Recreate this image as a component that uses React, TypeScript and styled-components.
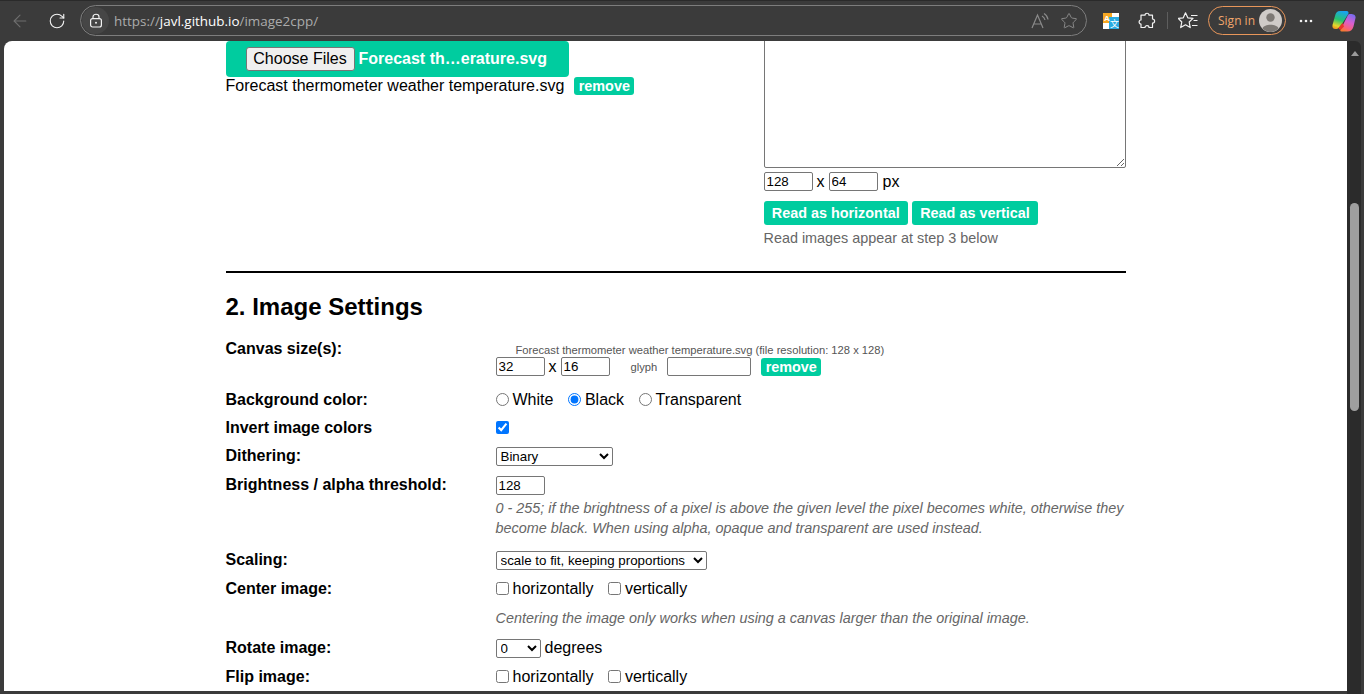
import React from 'react'
import styled, { createGlobalStyle } from 'styled-components'
import { ArrowLeft, RotateCw, Star } from 'lucide-react'

const GREEN = '#00cc9f'

const GlobalStyle = createGlobalStyle`
  html, body {
    margin: 0;
    height: 100%;
    overflow: hidden;
    background: #3b3b3b;
  }
  #root { height: 100%; }
`

const Window = styled.div`
  height: 694px;
  display: flex;
  flex-direction: column;
  background: #3b3b3b;
  font-family: "Liberation Sans", Arial, sans-serif;
  font-size: 16px;
  color: #000;
`

const Toolbar = styled.div`
  height: 41px;
  flex-shrink: 0;
  box-sizing: border-box;
  border-top: 1px solid #2a2a2a;
  display: flex;
  align-items: center;
  padding-bottom: 1px;
`

const NavButton = styled.div<{ $width: number }>`
  width: ${p => p.$width}px;
  display: flex;
  justify-content: center;
  align-items: center;
  flex-shrink: 0;
`

const AddressBar = styled.div`
  width: 1007px;
  height: 31px;
  margin-left: 6px;
  box-sizing: border-box;
  border: 1px solid #7d7d7d;
  border-radius: 16px;
  display: flex;
  align-items: center;
  flex-shrink: 0;
`

const LockBubble = styled.div`
  width: 27px;
  height: 27px;
  margin-left: 1px;
  border-radius: 50%;
  background: #464646;
  display: flex;
  align-items: center;
  justify-content: center;
`

const Url = styled.div`
  margin-left: 5px;
  flex: 1;
  font-family: "Open Sans", "Noto Sans", sans-serif;
  font-size: 13.45px;
  color: #ababab;
  white-space: nowrap;
`

const UrlHost = styled.span`
  color: #fff;
`

const AddressIcons = styled.div`
  display: flex;
  align-items: center;
  gap: 10px;
  margin-right: 8px;
`

const ToolSeparator = styled.div`
  width: 1px;
  height: 17px;
  background: #5e5e5e;
  flex-shrink: 0;
`

const SignIn = styled.div`
  width: 78px;
  height: 29px;
  box-sizing: border-box;
  border: 1px solid #e8965a;
  border-radius: 15px;
  display: flex;
  align-items: center;
  justify-content: space-between;
  padding: 0 3px 0 9px;
  color: #f0a56c;
  font-family: "Open Sans", "Noto Sans", sans-serif;
  font-size: 12px;
  flex-shrink: 0;
`

const Main = styled.div`
  flex: 1;
  min-height: 0;
  display: flex;
  padding-left: 4px;
  padding-bottom: 3px;
`

const Viewport = styled.div`
  flex: 1;
  min-width: 0;
  background: #fff;
  border-radius: 8px 0 0 0;
  overflow: hidden;
`

const Scrollbar = styled.div`
  width: 14px;
  margin-right: 3px;
  margin-bottom: -3px;
  background: #2b2b2b;
  border-radius: 0 6px 0 0;
  display: flex;
  flex-direction: column;
  align-items: center;
  flex-shrink: 0;
`

const ScrollArrow = styled.div`
  width: 0;
  height: 0;
  margin-top: 10px;
  margin-left: 1px;
  border-left: 4.5px solid transparent;
  border-right: 4.5px solid transparent;
  border-bottom: 5px solid #9b9b9b;
`

const ScrollThumb = styled.div`
  width: 9px;
  height: 208px;
  margin-top: 147px;
  margin-left: 1px;
  border-radius: 5px;
  background: #9f9f9f;
`

const Column = styled.div`
  width: 900px;
  margin: 0 auto;
`

const UploadGrid = styled.div`
  display: flex;
  justify-content: space-between;
  height: 230px;
`

const UploadLeft = styled.div`
  width: 343px;
`

const UploadBox = styled.div`
  height: 36px;
  box-sizing: border-box;
  padding-left: 20px;
  display: flex;
  align-items: center;
  background: ${GREEN};
  border-radius: 4px;
  color: #fff;
  font-weight: bold;
  white-space: nowrap;
`

const ChooseButton = styled.button`
  height: 24px;
  width: 109px;
  margin-right: 4px;
  padding: 0;
  box-sizing: border-box;
  border: 1px solid #767676;
  border-radius: 3px;
  background: #efefef;
  color: #000;
  font-family: "Liberation Sans", Arial, sans-serif;
  font-size: 16px;
`

const FileLine = styled.div`
  display: flex;
  align-items: center;
  height: 18px;
  white-space: nowrap;
`

const Pill = styled.span<{ $left: number }>`
  display: inline-flex;
  align-items: center;
  justify-content: center;
  flex-shrink: 0;
  height: 18px;
  width: 60px;
  margin-left: ${p => p.$left}px;
  background: ${GREEN};
  border-radius: 3px;
  color: #fff;
  font-size: 14.4px;
  font-weight: bold;
`

const UploadRight = styled.div`
  width: 362px;
`

const PasteArea = styled.textarea`
  display: block;
  width: 362px;
  height: 138px;
  margin: -11px 0 0;
  box-sizing: border-box;
  border: 1px solid #767676;
  border-radius: 2px;
  background: #fff;
`

const DimRow = styled.div`
  display: flex;
  align-items: center;
  height: 19px;
  margin-top: 4px;
`

const SmallInput = styled.input<{ $width?: number }>`
  width: ${p => p.$width ?? 49}px;
  height: 19px;
  box-sizing: border-box;
  padding: 1px 2px;
  border: 1px solid #767676;
  border-radius: 2px;
  font-family: "Liberation Sans", Arial, sans-serif;
  font-size: 13.333px;
  color: #000;
  background: #fff;
`

const Cross = styled.span`
  margin: 0 4px;
`

const Unit = styled.span`
  margin-left: 5px;
`

const ReadButtons = styled.div`
  display: flex;
  gap: 4px;
  margin-top: 10px;
`

const ReadButton = styled.span`
  height: 24px;
  padding: 0 8.25px;
  display: flex;
  align-items: center;
  background: ${GREEN};
  border-radius: 3px;
  color: #fff;
  font-size: 14.4px;
  font-weight: bold;
  white-space: nowrap;
`

const ReadHint = styled.div`
  margin-top: 5px;
  font-size: 14.4px;
  line-height: 16px;
  color: #666;
`

const Rule = styled.hr`
  height: 2px;
  margin: 0;
  border: 0;
  background: #000;
`

const SectionTitle = styled.h2`
  margin: 20px 0 14px;
  font-size: 24px;
  line-height: 28px;
  font-weight: bold;
`

const Row = styled.div<{ $height: number }>`
  display: grid;
  grid-template-columns: 270px 630px;
  height: ${p => p.$height}px;
  align-items: start;
`

const Label = styled.div`
  font-weight: bold;
  line-height: 28px;
`

const Value = styled.div`
  min-height: 28px;
  display: flex;
  align-items: center;
  flex-wrap: wrap;
  white-space: nowrap;
`

const CanvasValue = styled.div`
  display: flex;
  flex-direction: column;
`

const CanvasCaption = styled.div`
  height: 14px;
  padding-left: 20px;
  margin-top: 8px;
  font-size: 11.2px;
  line-height: 14px;
  color: #555;
  white-space: nowrap;
`

const CanvasControls = styled.div`
  display: flex;
  align-items: center;
  height: 19px;
`

const Glyph = styled.span`
  margin: 0 10px 0 21px;
  font-size: 11.2px;
  color: #555;
`

const OptionLabel = styled.label`
  display: inline-flex;
  align-items: center;
  margin-right: 14.5px;
`

const Radio = styled.input.attrs({ type: 'radio' })`
  width: 13px;
  height: 13px;
  margin: 0 4px 2px 0;
`

const Check = styled.input.attrs({ type: 'checkbox' })`
  width: 13px;
  height: 13px;
  margin: 0 4px 2px 0;
`

const Select = styled.select<{ $width: number }>`
  width: ${p => p.$width}px;
  height: 19px;
  box-sizing: border-box;
  padding: 0;
  border: 1px solid #767676;
  border-radius: 2px;
  background: #fff;
  color: #000;
  font-family: "Liberation Sans", Arial, sans-serif;
  font-size: 13.333px;
`

const DegreesText = styled.span`
  margin-left: 4px;
`

const Note = styled.div`
  font-size: 14.4px;
  line-height: 20px;
  font-style: italic;
  color: #666;
`

const BrightnessValue = styled.div`
  display: flex;
  flex-direction: column;
  padding-top: 5px;
`

const BrightnessNote = styled(Note)`
  margin-top: 3px;
  white-space: normal;
`

const CenterNote = styled(Note)`
  padding-top: 3px;
`

const ReadAloudIcon = () => (
  <svg width="20" height="20" viewBox="0 0 20 20" fill="none" stroke="#8a8a8a" strokeWidth="1.2">
    <path d="M2 17 L7.5 4 L13 17 M4 13 H11" />
    <path d="M12 5 Q14.5 6.5 15 9 M14 2.5 Q17.5 4.5 18 8.5" />
  </svg>
)

const TranslateIcon = () => (
  <svg width="16" height="16" viewBox="0 0 16 16">
    <rect width="16" height="16" fill="#fff" />
    <rect width="9" height="10" fill="#f7a823" />
    <rect x="6" y="4" width="10" height="12" fill="#29abe2" />
    <text x="1" y="8" fontSize="8" fontWeight="bold" fill="#fff" fontFamily="Liberation Sans">A</text>
    <text x="7" y="14" fontSize="9" fill="#fff" fontFamily="Noto Sans CJK SC">文</text>
  </svg>
)

const ExtensionIcon = () => (
  <svg width="18" height="18" viewBox="0 0 18 18" fill="none" stroke="#f2f2f2" strokeWidth="1.2" strokeLinejoin="round">
    <path d="M7 3.2 C7 0.6 11 0.6 11 3.2 H14.5 V7 C17.3 7 17.3 11.2 14.5 11.2 V15.5 H11 C11 13 7 13 7 15.5 H3 V12 C0.5 12 0.5 8 3 8 V3.2 Z" />
  </svg>
)

const FavoritesIcon = () => (
  <svg width="20" height="18" viewBox="0 0 20 18" fill="none" stroke="#f2f2f2" strokeWidth="1.2" strokeLinejoin="round">
    <path d="M7.5 0.8 L9.8 5.8 L15 6.4 L11.2 10 L12.2 15.6 L7.5 12.8 L2.7 15.6 L3.8 10 L0.3 6.4 L5.3 5.8 Z" />
    <path d="M13 3.5 H19.5 M15.5 8.5 H19.5 M14 13.5 H19.5" />
  </svg>
)

const AvatarIcon = () => (
  <svg width="23" height="23" viewBox="0 0 23 23">
    <circle cx="11.5" cy="11.5" r="11.5" fill="#cfcbc8" />
    <circle cx="11.5" cy="8.5" r="4.2" fill="#7d7975" />
    <path d="M3.5 19.5 C5 14.5 18 14.5 19.5 19.5 C15 24 8 24 3.5 19.5 Z" fill="#7d7975" />
  </svg>
)

const MoreIcon = () => (
  <svg width="14" height="4" viewBox="0 0 14 4" fill="#f2f2f2">
    <circle cx="2" cy="2" r="1.3" />
    <circle cx="7" cy="2" r="1.3" />
    <circle cx="12" cy="2" r="1.3" />
  </svg>
)

const CopilotIcon = () => (
  <svg width="24" height="22" viewBox="0 0 24 22">
    <defs>
      <linearGradient id="copilotA" x1="0.6" y1="0" x2="0.3" y2="1">
        <stop offset="0" stopColor="#1aa3f0" />
        <stop offset="0.5" stopColor="#27c46e" />
        <stop offset="0.85" stopColor="#e8d52a" />
        <stop offset="1" stopColor="#f09a20" />
      </linearGradient>
      <linearGradient id="copilotB" x1="0.7" y1="0" x2="0.3" y2="1">
        <stop offset="0" stopColor="#7a6cf0" />
        <stop offset="0.45" stopColor="#d95fd0" />
        <stop offset="0.8" stopColor="#f8607a" />
        <stop offset="1" stopColor="#f57a30" />
      </linearGradient>
    </defs>
    <path d="M8 1 H14.5 C16.5 1 17 2.5 16.2 4 L10 14 L7 17.5 C6 18.6 5 19 3.5 19 C1.2 19 0 17.5 0.5 15 L3 6 C3.8 2.8 5.2 1 8 1 Z" fill="url(#copilotA)" />
    <path d="M17.5 4 C20.5 3.6 23.8 4.6 23.6 7.5 L21.5 16.5 C20.8 19.5 18.5 21.5 15.5 21.5 H9.5 C8.2 21.5 8 20.5 8.8 19.3 L15 7 C15.6 5.6 16.2 4.2 17.5 4 Z" fill="url(#copilotB)" />
    <path d="M6.5 18 L10.5 13 L12 16.5 L9 19.5 C8 20.2 7 19.2 6.5 18 Z" fill="#e8352a" />
  </svg>
)

const LockIcon = () => (
  <svg width="14" height="15" viewBox="0 0 14 15" fill="none" stroke="#f2f2f2" strokeWidth="1.2">
    <rect x="1.6" y="5.6" width="10.8" height="8.4" rx="2" />
    <path d="M4 5.5 V3.8 C4 0.4 10 0.4 10 3.8 V5.5" />
    <circle cx="7" cy="9.8" r="1" fill="#f2f2f2" stroke="none" />
  </svg>
)

export default function App() {
  return (
    <Window>
      <GlobalStyle />
      <Toolbar>
        <NavButton $width={40}><ArrowLeft size={20} color="#6f6f6f" strokeWidth={1.3} /></NavButton>
        <NavButton $width={34}><RotateCw size={18} color="#f2f2f2" strokeWidth={1.5} /></NavButton>
        <AddressBar>
          <LockBubble><LockIcon /></LockBubble>
          <Url>https://<UrlHost>javl.github.io</UrlHost>/image2cpp/</Url>
          <AddressIcons>
            <ReadAloudIcon />
            <Star size={18} color="#8a8a8a" strokeWidth={1.3} />
          </AddressIcons>
        </AddressBar>
        <NavButton $width={48}><TranslateIcon /></NavButton>
        <NavButton $width={24}><ExtensionIcon /></NavButton>
        <NavButton $width={8} />
        <ToolSeparator />
        <NavButton $width={40}><FavoritesIcon /></NavButton>
        <SignIn>
          Sign in
          <AvatarIcon />
        </SignIn>
        <NavButton $width={40}><MoreIcon /></NavButton>
        <NavButton $width={36}><CopilotIcon /></NavButton>
      </Toolbar>
      <Main>
        <Viewport>
          <Column>
            <UploadGrid>
              <UploadLeft>
                <UploadBox>
                  <ChooseButton>Choose Files</ChooseButton>
                  Forecast th…erature.svg
                </UploadBox>
                <FileLine>
                  Forecast thermometer weather temperature.svg
                  <Pill $left={10}>remove</Pill>
                </FileLine>
              </UploadLeft>
              <UploadRight>
                <PasteArea />
                <DimRow>
                  <SmallInput defaultValue="128" />
                  <Cross>x</Cross>
                  <SmallInput defaultValue="64" />
                  <Unit>px</Unit>
                </DimRow>
                <ReadButtons>
                  <ReadButton>Read as horizontal</ReadButton>
                  <ReadButton>Read as vertical</ReadButton>
                </ReadButtons>
                <ReadHint>Read images appear at step 3 below</ReadHint>
              </UploadRight>
            </UploadGrid>
            <Rule />
            <SectionTitle>2. Image Settings</SectionTitle>
            <Row $height={51}>
              <Label>Canvas size(s):</Label>
              <CanvasValue>
                <CanvasCaption>Forecast thermometer weather temperature.svg (file resolution: 128 x 128)</CanvasCaption>
                <CanvasControls>
                  <SmallInput defaultValue="32" />
                  <Cross>x</Cross>
                  <SmallInput defaultValue="16" />
                  <Glyph>glyph</Glyph>
                  <SmallInput $width={84} />
                  <Pill $left={10}>remove</Pill>
                </CanvasControls>
              </CanvasValue>
            </Row>
            <Row $height={28}>
              <Label>Background color:</Label>
              <Value>
                <OptionLabel><Radio name="bg" />White</OptionLabel>
                <OptionLabel><Radio name="bg" defaultChecked />Black</OptionLabel>
                <OptionLabel><Radio name="bg" />Transparent</OptionLabel>
              </Value>
            </Row>
            <Row $height={28}>
              <Label>Invert image colors</Label>
              <Value><Check defaultChecked /></Value>
            </Row>
            <Row $height={29}>
              <Label>Dithering:</Label>
              <Value>
                <Select $width={117}><option>Binary</option></Select>
              </Value>
            </Row>
            <Row $height={75}>
              <Label>Brightness / alpha threshold:</Label>
              <BrightnessValue>
                <SmallInput defaultValue="128" />
                <BrightnessNote>
                  0 - 255; if the brightness of a pixel is above the given level the pixel becomes white, otherwise they become black. When using alpha, opaque and transparent are used instead.
                </BrightnessNote>
              </BrightnessValue>
            </Row>
            <Row $height={29}>
              <Label>Scaling:</Label>
              <Value>
                <Select $width={211}><option>scale to fit, keeping proportions</option></Select>
              </Value>
            </Row>
            <Row $height={30}>
              <Label>Center image:</Label>
              <Value>
                <OptionLabel><Check />horizontally</OptionLabel>
                <OptionLabel><Check />vertically</OptionLabel>
              </Value>
            </Row>
            <Row $height={29}>
              <div />
              <CenterNote>Centering the image only works when using a canvas larger than the original image.</CenterNote>
            </Row>
            <Row $height={29}>
              <Label>Rotate image:</Label>
              <Value>
                <Select $width={45}><option>0</option></Select>
                <DegreesText>degrees</DegreesText>
              </Value>
            </Row>
            <Row $height={29}>
              <Label>Flip image:</Label>
              <Value>
                <OptionLabel><Check />horizontally</OptionLabel>
                <OptionLabel><Check />vertically</OptionLabel>
              </Value>
            </Row>
          </Column>
        </Viewport>
        <Scrollbar>
          <ScrollArrow />
          <ScrollThumb />
        </Scrollbar>
      </Main>
    </Window>
  )
}
